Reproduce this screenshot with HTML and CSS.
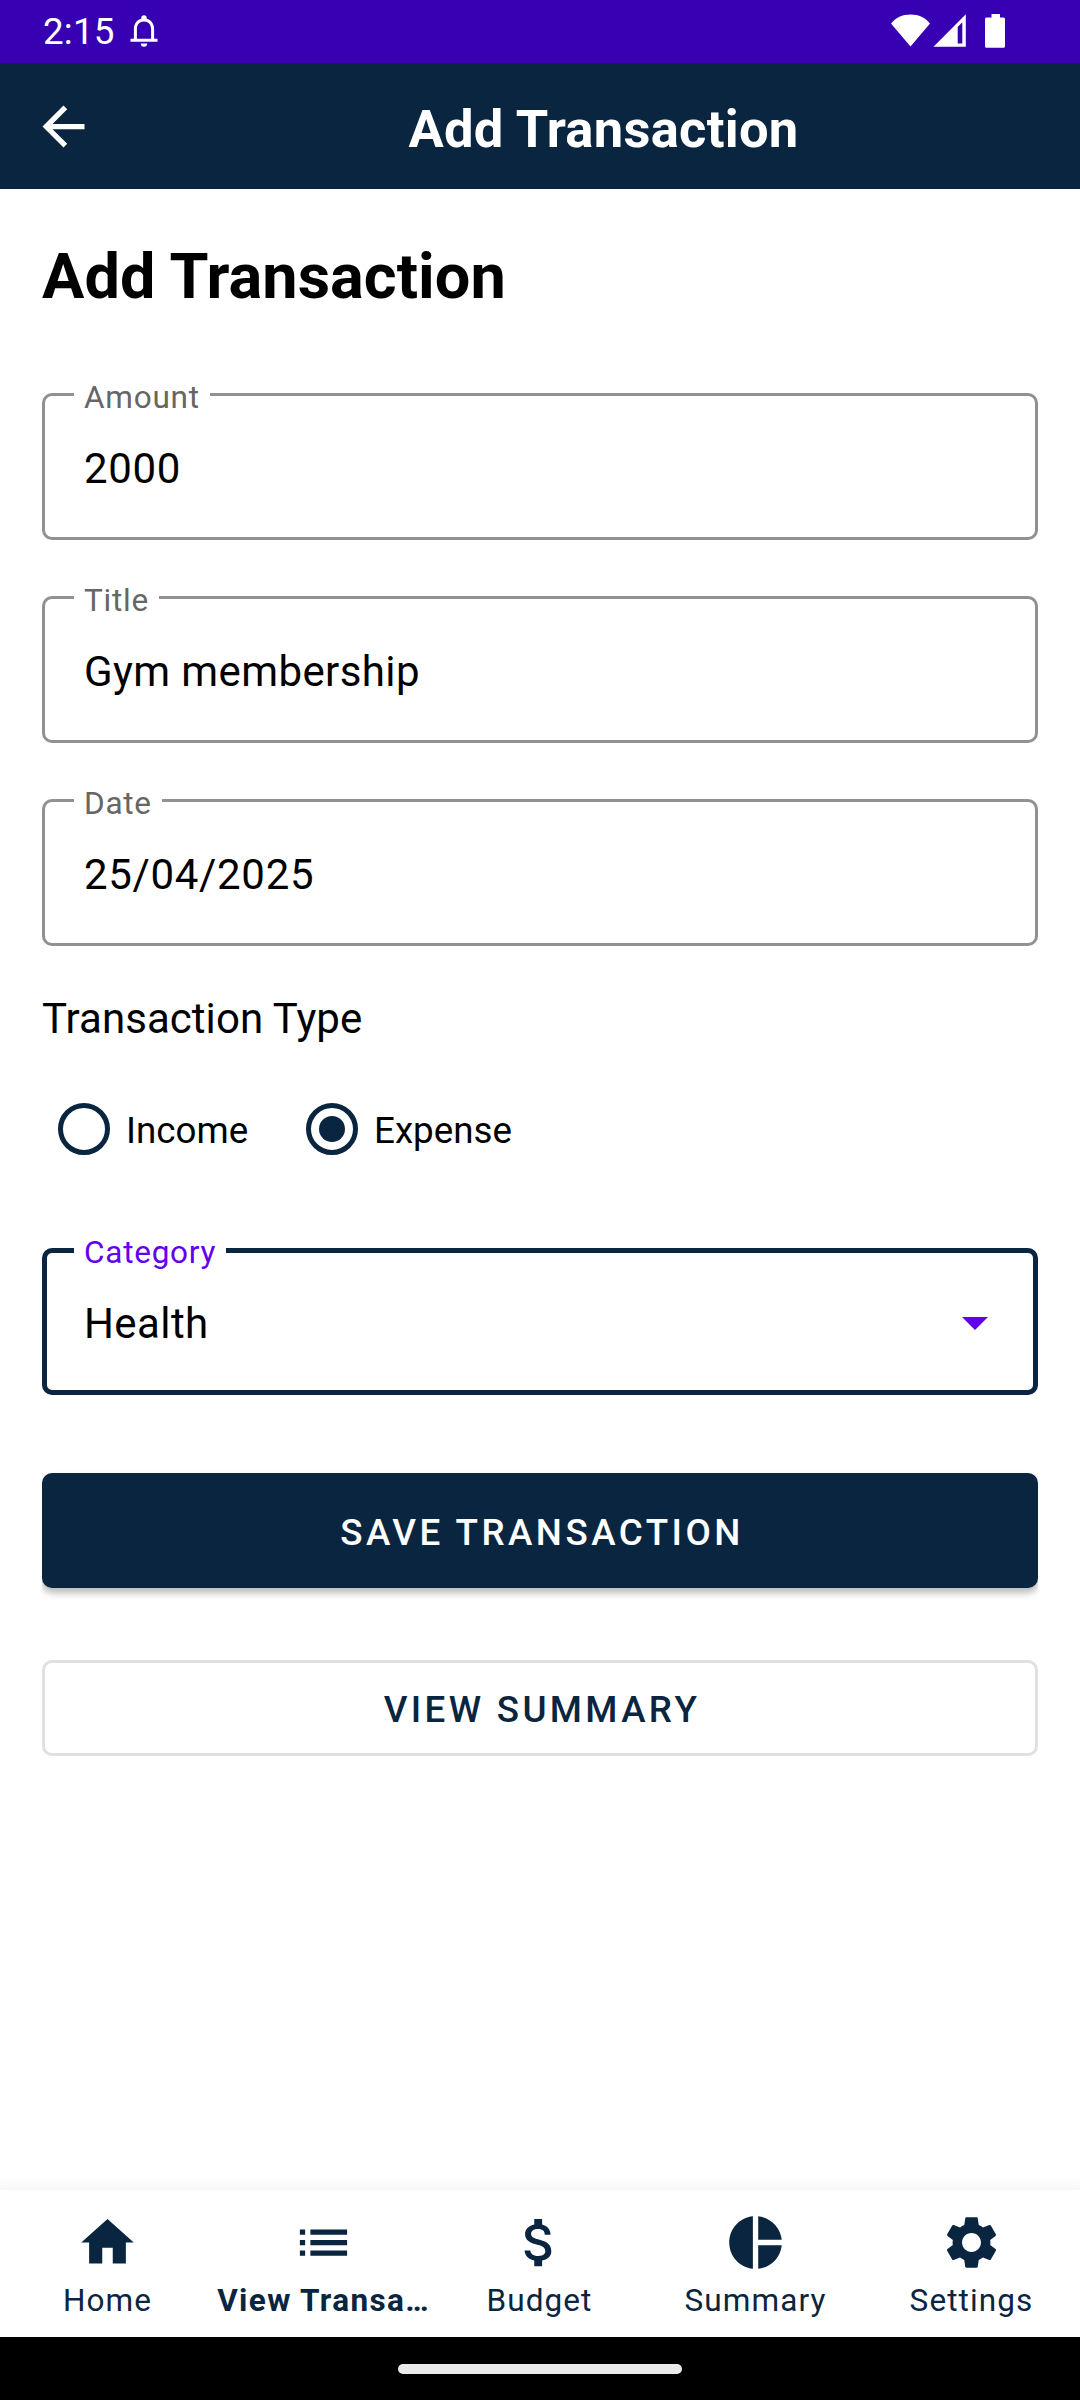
FILE: index.html
```html
<!DOCTYPE html>
<html lang="en">
<head>
<meta charset="utf-8">
<title>Add Transaction</title>
<link rel="stylesheet" href="styles.css">
</head>
<body>
<div class="screen">
  <div class="status">
    <span class="clock">2:15</span>
    <svg class="bell" viewBox="0 0 28 33" width="28" height="33"><path d="M.5 26.700v-2.900h3.400V14c0-5.500 3-9.200 7.400-10.300V2.900a2.700 2.700 0 0 1 5.400 0v.8c4.400 1.100 7.400 4.800 7.400 10.300v9.800h3.400v2.900zM6.900 23.800h14.200V14c0-4.800-2.800-7.600-7.100-7.600S6.900 9.200 6.900 14zM10.800 28.500h6.400a3.200 3.200 0 0 1-6.400 0z"/></svg>
    <svg class="indicators" viewBox="0 0 116 37" width="116" height="37">
      <path d="M1 10.500C6 4.500 12 1.500 20.500 1.500S35 4.500 40 10.500L20.500 33.500z"/>
      <path fill-rule="evenodd" d="M43.500 33.800L75.800 1.300V33.800zM67.700 14v16.500h4.600V9.300z"/>
      <path d="M101.500 1h8.500v3.500h3.500q1.500 0 1.500 1.500V33.200q0 1.500-1.500 1.500H96.500q-1.500 0-1.500-1.500V6q0-1.500 1.500-1.500h5z"/>
    </svg>
  </div>
  <header class="toolbar">
    <svg class="icon" viewBox="0 0 24 24"><path d="M20 11H7.830l5.590-5.590L12 4l-8 8 8 8 1.410-1.410L7.830 13H20v-2z"/></svg>
    <div class="toolbar-title">Add Transaction</div>
  </header>
  <main class="content">
    <h1 class="heading">Add Transaction</h1>
    <fieldset class="field"><legend>Amount</legend><div class="value numeric">2000</div></fieldset>
    <fieldset class="field"><legend>Title</legend><div class="value">Gym membership</div></fieldset>
    <fieldset class="field"><legend>Date</legend><div class="value numeric">25/04/2025</div></fieldset>
    <div class="type-label">Transaction Type</div>
    <div class="radios">
      <div class="option"><span class="radio"></span><span class="option-text">Income</span></div>
      <div class="option"><span class="radio checked"></span><span class="option-text">Expense</span></div>
    </div>
    <fieldset class="field focused"><legend>Category</legend><div class="value">Health<svg class="caret" viewBox="0 0 26 13" width="26" height="13"><path d="M0 0h26L13 13z"/></svg></div></fieldset>
    <div class="button primary">SAVE TRANSACTION</div>
    <div class="button outlined">VIEW SUMMARY</div>
  </main>
  <nav class="nav">
    <div class="item"><svg class="icon" viewBox="0 0 24 24"><path d="M10 20v-6h4v6h5v-8h3L12 3 2 12h3v8z"/></svg><span>Home</span></div>
    <div class="item active"><svg class="icon" viewBox="0 0 24 24"><path d="M3 13h2v-2H3v2zm0 4h2v-2H3v2zm0-8h2V7H3v2zm4 4h14v-2H7v2zm0 4h14v-2H7v2zM7 7v2h14V7H7z"/></svg><span>View Transa…</span></div>
    <div class="item"><svg class="icon" viewBox="0 0 24 24"><path d="M11.800 10.900c-2.270-.59-3-1.200-3-2.150 0-1.090 1.010-1.850 2.700-1.850 1.780 0 2.440.85 2.500 2.100h2.210c-.07-1.720-1.120-3.300-3.210-3.810V3h-3v2.160c-1.940.42-3.500 1.680-3.500 3.610 0 2.310 1.910 3.460 4.700 4.130 2.500.6 3 1.480 3 2.410 0 .69-.49 1.790-2.700 1.790-2.060 0-2.870-.92-2.980-2.100h-2.200c.12 2.190 1.760 3.420 3.680 3.830V21h3v-2.150c1.950-.37 3.500-1.500 3.500-3.550 0-2.840-2.430-3.810-4.700-4.400z"/></svg><span>Budget</span></div>
    <div class="item"><svg class="icon" viewBox="0 0 24 24"><path d="M11 2v20c-5.070-.5-9-4.790-9-10s3.930-9.500 9-10zm2.030 0v8.990H22c-.47-4.740-4.240-8.520-8.970-8.990zm0 11.010V22c4.740-.47 8.500-4.250 8.970-8.990h-8.970z"/></svg><span>Summary</span></div>
    <div class="item"><svg class="icon" viewBox="0 0 24 24"><path d="M19.140 12.940c.04-.3.06-.61.06-.94 0-.32-.02-.64-.07-.94l2.030-1.580c.18-.14.23-.41.12-.61l-1.920-3.320c-.12-.22-.37-.29-.59-.22l-2.390.96c-.5-.38-1.030-.7-1.620-.94l-.36-2.540c-.04-.24-.24-.41-.48-.41h-3.840c-.24 0-.43.17-.47.41l-.36 2.540c-.59.24-1.130.57-1.620.94l-2.390-.96c-.22-.08-.47 0-.59.22L2.740 8.870c-.12.21-.08.47.12.61l2.030 1.580c-.05.3-.09.63-.09.94s.02.64.07.94l-2.030 1.580c-.18.14-.23.41-.12.61l1.920 3.320c.12.22.37.29.59.22l2.390-.96c.5.38 1.030.7 1.620.94l.36 2.540c.05.24.24.41.48.41h3.840c.24 0 .44-.17.47-.41l.36-2.540c.59-.24 1.130-.56 1.620-.94l2.390.96c.22.08.47 0 .59-.22l1.920-3.320c.12-.22.07-.47-.12-.61l-2.010-1.580zM12 15.600c-1.980 0-3.600-1.620-3.600-3.600s1.620-3.600 3.600-3.600 3.600 1.620 3.600 3.600-1.620 3.600-3.600 3.600z"/></svg><span>Settings</span></div>
  </nav>
  <div class="system"><div class="handle"></div></div>
</div>
</body>
</html>
```
FILE: styles.css
```css
* { box-sizing: border-box; }
body { margin: 0; font-family: Roboto, sans-serif; background: #fff; color: #000; }
.screen { width: 1080px; height: 2400px; display: flex; flex-direction: column; overflow: hidden; }
.icon { width: 63px; height: 63px; fill: currentColor; flex: none; }

.status { height: 63px; background: #3700b3; color: #fff; display: flex; align-items: flex-start; padding: 0 74px 0 43px; }
.status svg { fill: #fff; }
.clock { font-size: 36.75px; line-height: 64px; height: 63px; letter-spacing: .2px; width: 87px; white-space: nowrap; }
.bell { margin-top: 15px; }
.indicators { margin: 13px 0 0 auto; }

.toolbar { height: 126px; background: #0a2540; color: #fff; display: flex; align-items: center; padding: 0 0 0 32px; }
.toolbar-title { flex: 1; margin-left: 32px; text-align: center; font-size: 52.5px; font-weight: 700; line-height: 62px; letter-spacing: .28px; padding-top: 5px; }

.content { flex: 1; padding: 42px 42px 0; display: flex; flex-direction: column; }
.heading { margin: 9px 0 65px; font-size: 63px; line-height: 74px; font-weight: 700; letter-spacing: .05px; }

.field { height: 161px; margin: 0 0 42px; padding: 0 39px; border: 3px solid #919191; border-radius: 10px; min-width: 0; }
.field legend { height: 31px; line-height: 25px; padding: 6px 10px 0; margin-left: -10px; font-size: 31.5px; letter-spacing: .75px; color: #666; }
.field .value { display: flex; align-items: center; justify-content: space-between; font-size: 42px; line-height: 50px; letter-spacing: .4px; padding-top: 34px; }
.field .numeric { letter-spacing: .67px; }
.field.focused { height: 160px; border: 5px solid #0a2540; padding: 0 37px; margin-bottom: 78px; }
.field.focused legend { color: #6200ee; line-height: 23px; }
.field.focused .value { padding-top: 33px; }
.caret { fill: #6200ee; margin: 0 8px 2px 0; }

.type-label { font-size: 42px; line-height: 50px; letter-spacing: .05px; margin-top: 6px; }
.radios { display: flex; margin: 58px 0 80px 16px; height: 53px; }
.option { display: flex; align-items: center; font-size: 36.75px; width: 248px; }
.option-text { padding-top: 4px; }
.radio { width: 52px; height: 52px; border: 5px solid #0a2540; border-radius: 50%; margin-right: 16px; display: grid; place-items: center; flex: none; }
.checked::after { content: ""; width: 26px; height: 26px; border-radius: 50%; background: #0a2540; }

.button { display: flex; align-items: center; justify-content: center; font-size: 36.75px; font-weight: 500; letter-spacing: 3.35px; border-radius: 10px; padding: 3px 0 0 4px; flex: none; }
.primary { height: 115px; background: #0a2540; color: #fff; letter-spacing: 3.48px; margin-bottom: 72px; box-shadow: 0 5px 7px rgba(0,0,0,.27); clip-path: inset(-5px 0 -20px 0); }
.outlined { height: 96px; border: 3px solid #e0e0e0; color: #0a2540; }

.nav { height: 147px; display: flex; background: #fff; color: #0a2540; box-shadow: 0 8px 14px 10px rgba(0,0,0,.06); }
.item { width: 216px; display: flex; flex-direction: column; align-items: center; padding-top: 21px; font-size: 31.5px; line-height: 36px; letter-spacing: 1.1px; }
.item .icon { margin-right: 2px; }
.item span { margin: 9px 1px 0 0; white-space: nowrap; }
.active span { font-weight: 700; letter-spacing: 1.35px; }

.system { position: relative; height: 63px; background: #000; display: flex; justify-content: center; padding-top: 27px; }
.handle { width: 284px; height: 10px; border-radius: 5px; background: #ebebeb; }
```
